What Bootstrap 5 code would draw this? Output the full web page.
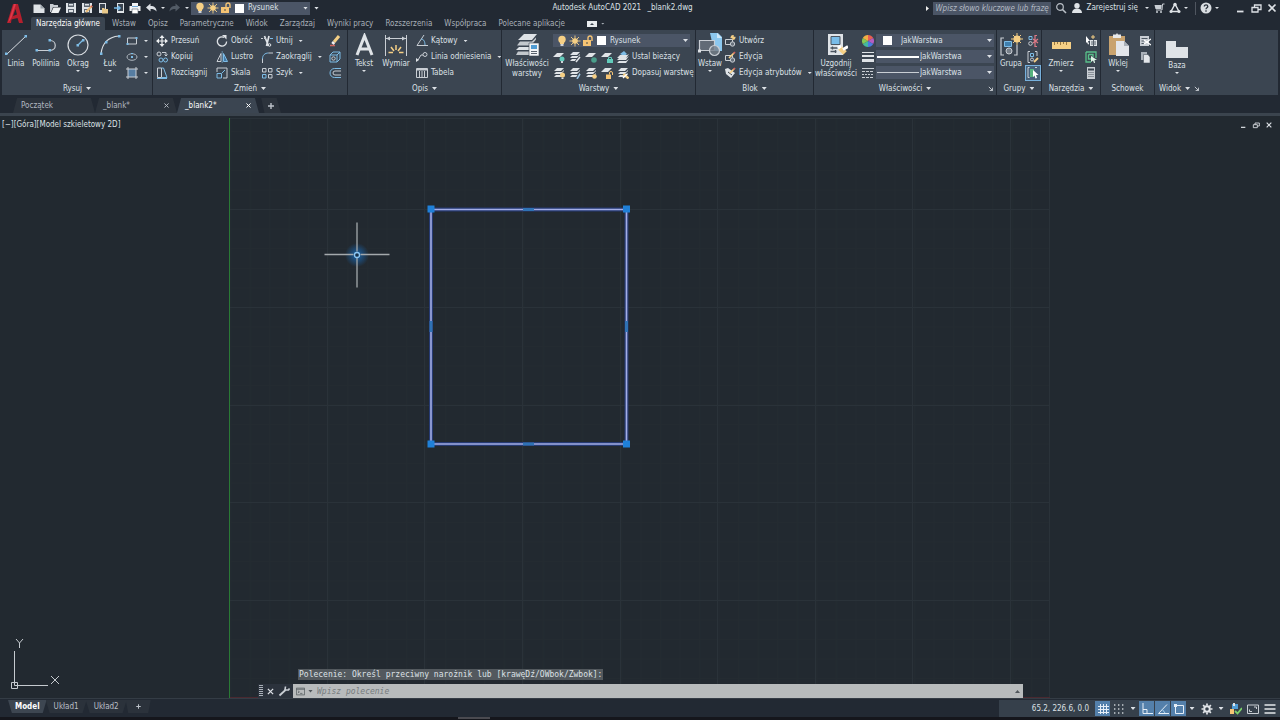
<!DOCTYPE html>
<html lang="pl">
<head>
<meta charset="utf-8">
<meta name="viewport" content="width=device-width, initial-scale=1">
<title>Autodesk AutoCAD 2021 _blank2.dwg</title>
<link href="https://cdn.jsdelivr.net/npm/bootstrap@5.3.0/dist/css/bootstrap.min.css" rel="stylesheet">
<style>
:root{--ink:#dde1e6;--dim:#a9b0b8;--frame:#222933;--ribbon:#3b4551;--field:#4b5566;--canvas:#222930;--sky:#7dbce6}
body{font:8px/12px "DejaVu Sans Condensed","Noto Sans",sans-serif;color:var(--ink);background:var(--frame);overflow:hidden}
button,select,input{font:inherit;color:inherit;background:none;border:0;padding:0;margin:0}
button{display:inline-flex;align-items:center;white-space:nowrap}
a{color:inherit;text-decoration:none;white-space:nowrap}
svg{flex:none;display:block}
.ic{width:12px;height:12px}
.big-ic{width:24px;height:24px}
.caret{width:5px;height:3px;flex:none;background:currentColor;clip-path:polygon(0 0,100% 0,50% 100%)}
.caret-s{width:4px;height:2px}
/* title bar and menu */
.logo-btn{width:31px;justify-content:center}
.title-row{height:16px}
.quick{gap:4px;padding-left:2px}
.tight{gap:3px}
.account{gap:4px;padding-right:2px}
.account .vr{margin-left:3px}
.win-first{margin-left:11px}
.app-title{padding-right:66px}
.field{background:var(--field);display:flex;align-items:center;gap:1px;padding:0 2px 0 3px;color:var(--ink)}
.field select{appearance:none;flex:1 1 0;min-width:0;outline:0;padding-left:3px;height:13px;padding-top:1px}
.layer-field{width:119px;height:13px;margin-left:2px}
.swatch{width:9px;height:9px;background:#fff;flex:none;margin-left:2px}
.find-box{width:118px;height:13px;background:var(--field);padding:0 2px;font-style:italic}
.find-box::placeholder{color:#b4bac4;opacity:1}
.menu-row{height:14px;padding-top:1px;color:var(--dim)}
.menu-row a{padding:0 6px;line-height:14px;height:13px}
.menu-row a.current{background:var(--ribbon);color:#fff;padding:0 5px;border-radius:2px 2px 0 0;margin-right:1px}
/* ribbon */
.ribbon{gap:1px;padding:0 2px;height:65px}
.pane{background:var(--ribbon);display:flex;flex-direction:column;flex:none}
.pane-body{display:flex;flex:1;padding:3px 3px 0}
.pane-title{height:14px;gap:4px;display:flex;align-items:center;justify-content:center;position:relative;padding-top:1px}
.pane-title .launch{position:absolute;right:3px;width:5px;height:5px}
.tool{flex-direction:column;justify-content:flex-start;line-height:10px;flex:none}
.tool span{margin-top:2px;white-space:pre-line;text-align:center}
.tool .caret{margin-top:1px}
.stack{display:flex;flex-direction:column;flex:none}
.stack>*{height:16px}
.stack button{gap:3px}
.stack .caret{margin-left:3px}
.marks{margin:0 2px 0 4px}
.combo{height:13px!important;margin:1px 0 2px}
.prop{width:118px}
.stroke-pick{padding-left:1px}
.on{border:1px solid #76b0dc!important;background:#47617a;width:16px}
.w28{width:28px}.w32{width:32px}.w44{width:44px}
/* file tabs */
.files{height:18px;padding:3px 0 0 13px;background:var(--frame)}
.file-tab{display:flex;align-items:center;justify-content:space-between;height:15px;width:82px;padding:0 7px 0 8px;background:#2c333c;color:#b2b8c0;clip-path:polygon(5% 0,95% 0,100% 100%,0 100%)}
.file-tab.current{background:var(--ribbon);color:#fff}
.file-tab .ic{width:7px;height:7px}
.add-tab{width:22px;height:15px;justify-content:center;background:#2c333c;clip-path:polygon(10% 0,80% 0,100% 100%,25% 100%)}
.add-tab .ic{margin-left:2px}
.band{height:3px;background:#3b444e}
/* drawing area */
.stage{background:var(--canvas);min-height:0}
.drawing{position:absolute;inset:0;width:100%;height:100%}
.view-label{position:absolute;left:2px;top:3px}
.view-ctl{position:absolute;right:7px;top:5px;gap:5px}
.view-ctl .ic{width:8px;height:8px}
.ucs{position:absolute;left:10px;bottom:6px;width:54px;height:54px}
.console{position:absolute;left:258px;right:257px;bottom:0;font-family:"DejaVu Sans Mono",monospace}
.echo{background:#53595e;margin-left:40px;padding:0 1px;line-height:11px;width:max-content;margin-bottom:4px}
.cmd{height:14px;background:#2b323c;gap:3px}
.x-ic{width:9px;height:9px}
.cmd-in{background:#b8bbbc;color:#50565b;padding:0 3px}
.cmd-in input{font-style:italic;outline:0;padding-top:1px}
.cmd-in input::placeholder{color:#767b7e;opacity:1}
/* bottom bars */
.foot{height:19px;border-top:1px solid #343c45}
.sheet{padding:0 8px;height:13px;line-height:14px;margin:1px -1px 0 0;background:#2b323b;color:#b9bfc6;clip-path:polygon(0 0,100% 0,90% 100%,10% 100%)}
.sheet.current{background:#3d4651;color:#fff;font-weight:700;padding:0 7px}
.status{background:#36404b;height:17px;padding-right:2px;margin-top:1px}
.coords{width:96px;padding-right:6px}
.lit,.plain{height:15px;width:15px;justify-content:center}
.lit{background:#5480ab}
.lit+.lit{margin-left:1px}
.plain{width:17px}
.plain.thin{width:12px}
.dock{height:3px;background:#15161c}
.dock i{width:32px;height:2px;background:#4a4a50;margin-left:458px;display:block}
</style>
</head>
<body class="vh-100 d-flex flex-column">

<svg width="0" height="0" class="position-absolute" aria-hidden="true">
<defs>
<symbol id="new" viewBox="0 0 12 12"><path fill="#dfe3e7" d="M.5 2.500h7l4 4V11H.5z"/><path fill="#9aa2aa" d="M7.500 2.500v4h4z"/></symbol>
<symbol id="open" viewBox="0 0 12 12"><path fill="#c9ced4" d="M1 2h3l1 1h4v2H4L2 10H1z"/><path fill="#eef0f2" d="M4.500 5.500H12L9.500 11H2z"/></symbol>
<symbol id="save" viewBox="0 0 12 12"><path fill="#dfe3e7" d="M1 1h10v10H1z"/><path fill="#59626d" d="M3 1h6v4H3zM3 7h6v4H3z"/><path fill="#dfe3e7" d="M4 2h4v1.500H4zM4 8h4v2H4z"/></symbol>
<symbol id="saveas" viewBox="0 0 12 12"><use href="#save"/><path stroke="#e9b872" stroke-width="2" d="M5 10l6-6"/><path stroke="#d86a5d" stroke-width="2" d="M10 5l1-1"/></symbol>
<symbol id="webopen" viewBox="0 0 12 12"><path fill="#dfe3e7" d="M2 1h7v10H2z"/><path fill="#3b4551" d="M3 2h5v6H3z"/><path fill="#e9c98a" d="M5 6h2l1 1h3v4.500H5z"/></symbol>
<symbol id="websave" viewBox="0 0 12 12"><path fill="#dfe3e7" d="M4 1h7v10H4z"/><path fill="#3b4551" d="M5 2h5v7H5z"/><path stroke="#74b8e8" fill="none" stroke-width="1.500" d="M1 6h6M5 4l2 2-2 2"/></symbol>
<symbol id="print" viewBox="0 0 12 12"><path fill="#f2f3f5" d="M3 1h6v3H3zM.5 4h11v5H.5z"/><path fill="#70a9d8" d="M3 4h6v1H3z"/><path fill="#fff" stroke="#555e69" stroke-width=".6" d="M3 7h6v4.500H3z"/></symbol>
<symbol id="undo" viewBox="0 0 12 12"><path fill="currentColor" d="M1 5.500l4.500-4V4c4 0 6 2 6 5.500C10 7.500 8 7 5.500 7v2.500z"/></symbol>
<symbol id="redo" viewBox="0 0 12 12"><path fill="#525b66" d="M11 5.500l-4.500-4V4c-4 0-6 2-6 5.500C2 7.500 4 7 6.500 7v2.500z"/></symbol>
<symbol id="bulb" viewBox="0 0 12 12"><circle cx="6" cy="4.500" r="3.700" fill="#f5cf85"/><path fill="#f5cf85" d="M4 7h4v2H4z"/><path fill="#cfd3d8" d="M4.500 9h3v2h-3z"/></symbol>
<symbol id="sun" viewBox="0 0 12 12"><circle cx="6" cy="6" r="2.800" fill="#f5cf85"/><path stroke="#f5cf85" d="M6 .5v11M.5 6h11M2 2l8 8M10 2l-8 8" stroke-width=".9"/></symbol>
<symbol id="lock" viewBox="0 0 12 12"><path fill="#f5c474" d="M1 5h8v6H1z"/><path fill="none" stroke="#f5c474" stroke-width="1.400" d="M6 5V3a2 2 0 0 1 4 0v3"/><path fill="#4b4a45" d="M4.500 7h1v2h-1z"/></symbol>
<symbol id="glass" viewBox="0 0 12 12"><circle cx="5" cy="5" r="3.300" fill="none" stroke="#b9bfc6" stroke-width="1.200"/><path stroke="#b9bfc6" stroke-width="1.600" d="M7.500 7.500L11 11"/></symbol>
<symbol id="user" viewBox="0 0 12 12"><circle cx="6" cy="3.700" r="2.700" fill="#dfe3e7"/><path fill="#dfe3e7" d="M1 11c0-3 2-4.500 5-4.500S11 8 11 11z"/></symbol>
<symbol id="cart" viewBox="0 0 12 12"><path fill="none" stroke="#c9ced4" d="M11.500 2H9.500L9 8H3"/><path fill="#c9ced4" d="M1.500 3h7.200L8.300 7H2.500z"/><circle cx="4" cy="10" r="1" fill="#c9ced4"/><circle cx="8" cy="10" r="1" fill="#c9ced4"/></symbol>
<symbol id="tri-net" viewBox="0 0 12 12"><path fill="none" stroke="#dfe3e7" stroke-width="1.500" d="M6 2L2 9.500M6 2l4 7.500M3 9.500h6"/><circle cx="6" cy="2.500" r="1.700" fill="#dfe3e7"/><circle cx="2" cy="9.500" r="1.500" fill="#dfe3e7"/><circle cx="10" cy="9.500" r="1.500" fill="#dfe3e7"/></symbol>
<symbol id="help" viewBox="0 0 12 12"><circle cx="6" cy="6" r="5.500" fill="#d9dde1"/><path fill="none" stroke="#2a323c" stroke-width="1.300" d="M4.300 4.500c0-2.200 3.500-2.200 3.500 0C7.800 5.800 6 5.700 6 7.200M6 8.300v1.400"/></symbol>
<symbol id="min" viewBox="0 0 12 12"><path stroke="currentColor" stroke-width="1.800" d="M3 9.500h6.500"/></symbol>
<symbol id="restore" viewBox="0 0 12 12"><path fill="none" stroke="currentColor" stroke-width="1.300" d="M2 5.500h6v4.500H2zM4.500 5.500V3H11v4.500H8"/></symbol>
<symbol id="close" viewBox="0 0 12 12"><path stroke="currentColor" stroke-width="1.700" d="M2.500 2.500l7 7M9.500 2.500l-7 7"/></symbol>
<symbol id="plus" viewBox="0 0 12 12"><path stroke="#bcc2c9" stroke-width="1.400" d="M6 3v6M3 6h6"/></symbol>

<symbol id="line" viewBox="0 0 24 24"><path stroke="#d8dce1" d="M3 21L22 3"/><path fill="#7dbce6" d="M1 19.500h2.500V22H1zM20.500 2H23v2.500h-2.500z"/></symbol>
<symbol id="pline" viewBox="0 0 24 24"><path fill="none" stroke="#c9ced4" stroke-width="1.200" d="M3 17.500h13c7 0 7-10 0-10"/><path fill="#7dbce6" d="M1.500 16h2.500v2.500H1.500zM14.500 6H17v2.500h-2.500zM14.500 16H17v2.500h-2.500z"/></symbol>
<symbol id="circle" viewBox="0 0 24 24"><circle cx="12" cy="12" r="10" fill="none" stroke="#d8dce1" stroke-width="1.200"/><path stroke="#7dbce6" stroke-width="1.200" d="M12 12l5-5"/><path fill="#7dbce6" d="M10.500 11H13v2.500h-2.500zM16 6h2.500v2.500H16z"/></symbol>
<symbol id="arc" viewBox="0 0 24 24"><path fill="none" stroke="#d8dce1" stroke-width="1.200" d="M3 21C4 11 10 4 21 3"/><path fill="#7dbce6" d="M2 19.500h2.500V22H2zM7 8h2.500v2.500H7zM20 2h2.500v2.500H20z"/></symbol>
<symbol id="rect" viewBox="0 0 12 12"><path fill="none" stroke="#c9ced4" d="M1.500 3h9v6h-9z"/><path fill="#7dbce6" d="M.5 8h2v2h-2zM9.500 2h2v2h-2z"/></symbol>
<symbol id="ellipse" viewBox="0 0 12 12"><ellipse cx="6" cy="6" rx="5" ry="3.300" fill="none" stroke="#aeb6be"/><path fill="#7dbce6" d="M5 5h2v2H5zM5 2h2v1H5z"/></symbol>
<symbol id="hatch" viewBox="0 0 12 12"><path fill="#567da2" d="M2 2h8v8H2z"/><path fill="none" stroke="#c9ced4" d="M2 0v12M10 0v12M0 2h12M0 10h12"/></symbol>

<symbol id="move" viewBox="0 0 12 12"><path stroke="#eef0f2" stroke-width="1.200" d="M6 2v8M2 6h8"/><path fill="#eef0f2" d="M6 0l2.500 3h-5zM6 12l2.500-3h-5zM0 6l3-2.500v5zM12 6L9 3.500v5z"/></symbol>
<symbol id="copy" viewBox="0 0 12 12"><g fill="none" stroke="#c9ced4"><circle cx="3" cy="3" r="2"/><path d="M6 1.500h4v3M8.500 3.500l1.500 1.500 1.500-1.500"/><circle cx="5" cy="9" r="2" stroke="#7dbce6"/><circle cx="9.500" cy="9" r="2" stroke="#7dbce6"/></g></symbol>
<symbol id="stretch" viewBox="0 0 12 12"><path fill="none" stroke="#c9ced4" d="M1.500 1h4v9.500h-4z"/><path fill="none" stroke="#7dbce6" d="M5.500 1h2l3.500 9.500H5.500M1 11.500h10"/></symbol>
<symbol id="rotate" viewBox="0 0 12 12"><path fill="none" stroke="#dfe3e7" stroke-width="1.300" d="M8 2.300A4.600 4.600 0 1 0 10.600 6.500"/><path fill="#dfe3e7" d="M6 0h4.500v4.500z"/></symbol>
<symbol id="mirror" viewBox="0 0 12 12"><path fill="none" stroke="#c9ced4" d="M5 2.500v8H1z"/><path fill="#437aa8" stroke="#7dbce6" d="M7.500 2.500v8h4z"/><path stroke="#7dbce6" stroke-width=".6" d="M6.200 0v12"/></symbol>
<symbol id="scale" viewBox="0 0 12 12"><path fill="none" stroke="#c9ced4" d="M1 5V1h10v10H7"/><path fill="none" stroke="#7dbce6" d="M1 6.500h4.500V11H1zM6 6l3-3"/></symbol>
<symbol id="trim" viewBox="0 0 12 12"><path stroke="#dfe3e7" stroke-width="1.700" d="M3.500 1l4 10M8 1L5.500 11"/><path stroke="#c9ced4" stroke-dasharray="2 1" d="M0 3.500h5"/><path stroke="#7dbce6" d="M9 3.500h3"/><circle cx="8.500" cy="10" r="1.300" fill="none" stroke="#dfe3e7"/></symbol>
<symbol id="fillet" viewBox="0 0 12 12"><path fill="none" stroke="#7dbce6" d="M1.500 8c0-4 2.500-6 6-6"/><path stroke="#c9ced4" d="M1.500 8v4M7.500 2H12"/></symbol>
<symbol id="array" viewBox="0 0 12 12"><g fill="none"><path stroke="#c9ced4" d="M1.500 1.500h3.500v3.500H1.500zM7.500 1.500H11v3.500H7.500zM7.500 7.500H11V11H7.500z"/><path stroke="#7dbce6" d="M1.500 7.500h3.500V11H1.500z"/></g></symbol>
<symbol id="erase" viewBox="0 0 12 12"><path stroke="#f3cf85" stroke-width="3" d="M5 7l5-6"/><path stroke="#f0f0f0" stroke-width="3" d="M3.500 9L5 7"/><path stroke="#d0645d" stroke-width="1.500" d="M1 10.500h5"/></symbol>
<symbol id="explode" viewBox="0 0 12 12"><path fill="none" stroke="#7dbce6" d="M1 4h7v7H1zM1 4l3-3h7v7L8 11M8 4l3-3"/><circle cx="4.500" cy="7.500" r="1.700" fill="none" stroke="#c9ced4"/></symbol>
<symbol id="offset" viewBox="0 0 12 12"><path fill="none" stroke="#7dbce6" d="M12 1.500H5.500a4.500 4.500 0 0 0 0 9H12"/><path fill="none" stroke="#c9ced4" d="M12 4H6a2 2 0 0 0 0 4h6"/></symbol>

<symbol id="letter-a" viewBox="0 0 24 24"><path fill="none" stroke="#dfe3e7" stroke-width="3" d="M5 22L12.500 3 20 22M7.500 16h10"/></symbol>
<symbol id="dim" viewBox="0 0 24 24"><path stroke="#c9ced4" d="M1.500 2v21M22.500 2v21M2 5.500h20"/><path fill="#c9ced4" d="M2 5.500l4-2v4zM22 5.500l-4-2v4z"/><path stroke="#f5cf85" stroke-width="1.500" d="M12 12v5M7 14l3 4M17 14l-3 4M4.500 19.500H9M15 19.500h4.500"/></symbol>
<symbol id="angle" viewBox="0 0 12 12"><path fill="none" stroke="#c9ced4" d="M8 0L1 10.500h11"/><path fill="none" stroke="#7dbce6" d="M5 4c3 0 4 3 4 6"/></symbol>
<symbol id="leader" viewBox="0 0 12 12"><circle cx="9" cy="3.500" r="2" fill="none" stroke="#c9ced4"/><path fill="none" stroke="#c9ced4" d="M7 4H5L2 9"/><path fill="#dfe3e7" d="M0 11V7l3 2z"/></symbol>
<symbol id="grid" viewBox="0 0 12 12"><path fill="none" stroke="#c9ced4" d="M.5 1.500h11v9H.5zM3.500 4v7M6 4v7M8.500 4v7"/><path fill="#c9ced4" d="M1 2h10v1.500H1z"/></symbol>

<symbol id="layers" viewBox="0 0 24 24"><g fill="#dfe3e7"><path d="M9 1h13l-5 6H3z"/><path d="M5 8.500h12l4-4v2l-5 6H2z" fill="#c3c8cd"/><path d="M4 14h13l-2 3H1z"/><path d="M3 18.500h11V22H1z" fill="#c3c8cd"/></g><path fill="#f2f4f6" stroke="#3b4551" stroke-width=".6" d="M14 10h10v13H14z"/><path fill="#4f9bd3" d="M16 12h6v4h-6z"/><path stroke="#59626d" d="M16 18.500h6M16 20.500h6"/></symbol>
<symbol id="sheets" viewBox="0 0 12 12"><path fill="#dfe3e7" d="M4 1h7L8 4H1zM3 5h6l2-2v1L8 7H1zM3 8h6l2-2v1l-3 3H1z"/></symbol>
<symbol id="ly1" viewBox="0 0 12 12"><path fill="#dfe3e7" d="M4 2h7L7 6H0z"/><circle cx="9" cy="8" r="2.500" fill="#62cbbb"/><path fill="#cfd3d8" d="M8 10h2v2H8z"/></symbol>
<symbol id="ly2" viewBox="0 0 12 12"><use href="#sheets"/><path stroke="#3b4551" stroke-width="3" d="M7 11l4-5"/><path stroke="#dfe3e7" stroke-width="1.500" d="M7 11l4-5"/></symbol>
<symbol id="ly3" viewBox="0 0 12 12"><path fill="#dfe3e7" d="M4 2h7L7 6H0z"/><circle cx="9" cy="9" r="2.800" fill="#4a9e8b"/></symbol>
<symbol id="ly4" viewBox="0 0 12 12"><path fill="#dfe3e7" d="M4 2h7L7 6H0z"/><path fill="#62cbbb" d="M6 8h6v4H6z"/><path fill="none" stroke="#62cbbb" d="M7.500 8V6.500h3V8"/></symbol>
<symbol id="ly5" viewBox="0 0 12 12"><path fill="#7dbce6" d="M3 3l4-3 3 3-3 2z"/><path fill="#dfe3e7" d="M3 4h7l2-1-3 4H0zM2 7h7l3-2-3 4H0zM2 10h7l3-2-3 4H0z"/></symbol>
<symbol id="ly6" viewBox="0 0 12 12"><use href="#sheets"/><circle cx="9.500" cy="8" r="2.500" fill="#f5cf85"/><path fill="#dfe3e7" d="M8.500 10.500h2V12h-2z"/></symbol>
<symbol id="ly7" viewBox="0 0 12 12"><use href="#sheets"/><path stroke="#3b4551" stroke-width="3" d="M7.500 12l3.500-5"/><path stroke="#9cc6e6" stroke-width="1.500" d="M8 12l3-5"/></symbol>
<symbol id="ly8" viewBox="0 0 12 12"><use href="#sheets"/><circle cx="9.500" cy="9.500" r="2.300" fill="#f5cf85"/></symbol>
<symbol id="ly9" viewBox="0 0 12 12"><path fill="#dfe3e7" d="M4 1h7L7 5H0z"/><path fill="#f5c474" d="M5 7.500h5V12H5z"/><path fill="none" stroke="#f5c474" d="M8.500 7.500V6a1.500 1.500 0 0 1 3 0v2"/></symbol>
<symbol id="ly10" viewBox="0 0 12 12"><use href="#sheets"/><path stroke="#f5cf85" stroke-width="2.500" d="M6.500 7l5 4.500"/><path stroke="#fff" stroke-width="1.500" d="M6 11l4-4"/></symbol>

<symbol id="insert" viewBox="0 0 24 24"><path fill="#8cc8ef" d="M12 0h8l4 4v14h-8z"/><path fill="#cfe8f8" d="M19 0v5h5z"/><path fill="#626b76" stroke="#c9ced4" stroke-width="1.200" d="M1.500 7.500h15v10h-15z"/><path fill="#dfe3e7" d="M0 16.500h3v3H0z"/><circle cx="16.500" cy="17.500" r="5" fill="#77808a" fill-opacity=".8" stroke="#c9ced4" stroke-width="1.200"/></symbol>
<symbol id="blk" viewBox="0 0 12 12"><path fill="none" stroke="#c9ced4" d="M1.500 4.500h7v5h-7z"/><circle cx="8.500" cy="9" r="2.200" fill="#69727d" stroke="#c9ced4"/></symbol>
<symbol id="blk-new" viewBox="0 0 12 12"><use href="#blk"/><path stroke="#f5cf85" stroke-width="1.400" d="M9 0v5M6.500 2.500h5M7.300.8l3.400 3.400"/></symbol>
<symbol id="blk-edit" viewBox="0 0 12 12"><use href="#blk"/><path stroke="#f5cf85" stroke-width="1.700" d="M5 7l5-5"/><path stroke="#d0645d" stroke-width="1.700" d="M9.500 2.500L11 1"/></symbol>
<symbol id="attr" viewBox="0 0 12 12"><path fill="#dfe3e7" d="M1 2l3-1 7 5-4 5-5-4z"/><path stroke="#3b4551" d="M4 5l4 3"/><path stroke="#f5cf85" stroke-width="1.700" d="M6 6l4-4"/><path stroke="#d0645d" stroke-width="1.700" d="M9.500 2.500L11 1"/></symbol>
<symbol id="match" viewBox="0 0 24 24"><path fill="#dfe3e7" d="M4 1h15v21H4z"/><path fill="#79bce8" stroke="#4b5560" d="M7 3.500h9v8H7z"/><path stroke="#4b5560" stroke-width="1.300" d="M6.500 15h7M6.500 18.500h6M8.500 13.500v3M11.500 17v3"/><path stroke="#f5cf85" stroke-width="5" d="M16 15l5 5"/><path stroke="#fff" stroke-width="3" d="M19 16.500l5-3M14 15l3-2"/></symbol>
<symbol id="wheel" viewBox="0 0 12 12"><path fill="#e85f52" d="M6 6V0a6 6 0 0 1 5.200 3z"/><path fill="#b45dc0" d="M6 6l5.200-3a6 6 0 0 1 0 6z"/><path fill="#4c7be0" d="M6 6l5.200 3A6 6 0 0 1 6 12z"/><path fill="#44b9a0" d="M6 6v6A6 6 0 0 1 .8 9z"/><path fill="#86c855" d="M6 6L.8 9a6 6 0 0 1 0-6z"/><path fill="#f3b044" d="M6 6L.8 3A6 6 0 0 1 6 0z"/></symbol>
<symbol id="weight" viewBox="0 0 12 12"><path fill="#dfe3e7" d="M0 1h12v1H0zM0 4h12v2H0zM0 8h12v3H0z"/></symbol>
<symbol id="ltype" viewBox="0 0 12 12"><path stroke="#c9ced4" d="M0 1.500h12"/><path stroke="#c9ced4" stroke-dasharray="3 1" d="M0 4.500h12M0 10.500h12"/><path stroke="#c9ced4" stroke-dasharray="2 1" d="M0 7.500h12"/></symbol>

<symbol id="group" viewBox="0 0 24 24"><path fill="none" stroke="#c9ced4" stroke-width="1.200" d="M5 5H2v17h3M15 22h3V12"/><path fill="#3f7fae" stroke="#7dbce6" d="M5.500 8.500h7v5h-7z"/><circle cx="10" cy="18" r="3" fill="#77808a" stroke="#c9ced4"/><circle cx="18" cy="6" r="3.500" fill="#f5cf85"/><path stroke="#f5cf85" d="M18 0v12M12 6h12M14 2l8 8M22 2l-8 8"/></symbol>
<symbol id="ungroup" viewBox="0 0 12 12"><path fill="none" stroke="#7dbce6" d="M2 1.500h3v3H2z"/><circle cx="3.500" cy="8.500" r="1.800" fill="none" stroke="#c9ced4"/><path fill="none" stroke="#e07a86" stroke-width="1.200" d="M10 .5H8v11h2M6 4l5 4M11 4L6 8"/></symbol>
<symbol id="gr-edit" viewBox="0 0 12 12"><path fill="none" stroke="#c9ced4" d="M3 .5H1v11h2M8 .5h2V5"/><path fill="none" stroke="#7dbce6" d="M3.500 2.500h3v3h-3z"/><circle cx="5" cy="8.500" r="1.500" fill="none" stroke="#c9ced4"/><path stroke="#f5cf85" stroke-width="1.800" d="M7 11l4-4"/></symbol>
<symbol id="gr-sel" viewBox="0 0 12 12"><path fill="none" stroke="#c9ced4" d="M2.500.5H1v10h1.500M8 .5h2"/><path fill="#56b37f" d="M3 2h4v8H3z"/><path fill="#fff" d="M6 3l5.500 5H9l1 3-1.500.5-1-3L6 10z"/></symbol>
<symbol id="ruler" viewBox="0 0 24 24"><path fill="#f5cf85" d="M3 9h19v7H3z"/><path stroke="#9b7a42" d="M5.500 9v3M8.500 9v2M11.500 9v3M14.500 9v2M17.500 9v3"/></symbol>
<symbol id="qsel" viewBox="0 0 12 12"><path fill="#dfe3e7" d="M5 5h7v6H5z"/><path stroke="#59626d" d="M6 7h5M6 9h5M8.500 5v6"/><path stroke="#f5cf85" d="M8 0v4M6 2h4"/><path fill="#fff" d="M1 1l4 5H3l1 3-1 .5L2 7 1 8z"/></symbol>
<symbol id="selall" viewBox="0 0 12 12"><path fill="none" stroke="#58c08a" stroke-width="1.300" d="M1 1h10v6M1 1v10h5M3.500 3.500H8V6M3.500 3.500V8H6"/><path fill="#dff5e8" d="M6 5l6 4H9.500l.5 3H9L8 9.500 6 11z"/></symbol>
<symbol id="calc" viewBox="0 0 12 12"><path fill="#c9ced4" d="M2 0h8v12H2z"/><path fill="#3b4551" d="M3 1.500h6v2H3z"/><path stroke="#4c5661" stroke-dasharray="1 1" d="M3.500 5.500h6M3.500 7.500h6M3.500 9.500h6"/></symbol>
<symbol id="paste" viewBox="0 0 24 24"><path fill="#c9a36e" d="M3 3h16v19H3z"/><path fill="#e8eaec" d="M7 1.500h3l1-1.500 1 1.500h3V5H7z"/><path fill="#e3e6ea" d="M10 8h8l5 5v10H10z"/><path fill="#aab1b9" d="M18 8v5h5z"/></symbol>
<symbol id="cut" viewBox="0 0 12 12"><path fill="#c9ced4" d="M1 1h9v10H1z"/><path stroke="#4c5661" d="M2.500 3.500h6M2.500 6h3M2.500 8.500h3"/><path stroke="#fff" stroke-width="1.300" d="M5 5l7 5M5 9l7-5"/></symbol>
<symbol id="clip" viewBox="0 0 12 12"><path fill="#aab1b9" d="M2 1h6v8H2z"/><path fill="#e3e6ea" stroke="#3b4551" stroke-width=".5" d="M4.500 3.500H9L11 6v6H4.500z"/></symbol>
<symbol id="base" viewBox="0 0 24 24"><path fill="#dfe3e7" d="M1 4h10v6h12v11H1z"/></symbol>
<symbol id="launch" viewBox="0 0 6 6"><path fill="none" stroke="currentColor" d="M1 1l4 4M5.500 2v3.500H2"/></symbol>
<symbol id="wrench" viewBox="0 0 12 12"><path stroke="#c9ced4" stroke-width="1.800" d="M1.500 10.500L7.500 5"/><path fill="none" stroke="#c9ced4" stroke-width="1.600" d="M7.500 1.500L7 5l3.500 0 1-1.500"/></symbol>
<symbol id="prompt" viewBox="0 0 12 12"><path fill="none" stroke="#4f5559" d="M.5 1.500h11v9H.5zM.5 3h11M2.500 5l2 1.500-2 1.500M5.500 8.500h3"/></symbol>
<symbol id="s-grid" viewBox="0 0 12 12"><path stroke="#e6eef6" d="M3.500 1v10M6.500 1v10M9.500 1v10M1 3.500h11M1 6.500h11M1 9.500h11"/></symbol>
<symbol id="s-dots" viewBox="0 0 12 12"><path stroke="#c9ced4" stroke-width="1.400" stroke-dasharray="1.400 2.600" d="M1 2h10M1 6h10M1 10h10"/></symbol>
<symbol id="s-ortho" viewBox="0 0 12 12"><path fill="none" stroke="#e6eef6" d="M2 0v10.500h10M2 6.500h4v4"/></symbol>
<symbol id="s-polar" viewBox="0 0 12 12"><path fill="none" stroke="#e6eef6" d="M10 1.500L1.500 10.500H12"/><path stroke="#a9d3f2" d="M5 6l3 4"/></symbol>
<symbol id="s-snap" viewBox="0 0 12 12"><path fill="none" stroke="#e6eef6" d="M2.500 2.500h8v8h-8z"/><path fill="#e6eef6" d="M1 1h3v3H1z"/></symbol>
<symbol id="gear" viewBox="0 0 12 12"><circle cx="6" cy="6" r="2.800" fill="none" stroke="#e3e6ea" stroke-width="2"/><path stroke="#e3e6ea" stroke-width="1.700" d="M6 .5v2M6 9.500v2M.5 6h2M9.500 6h2M2.100 2.100l1.400 1.400M8.500 8.500l1.400 1.400M9.900 2.100L8.500 3.500M3.500 8.500L2.100 9.900"/></symbol>
<symbol id="s-mon" viewBox="0 0 12 12"><path fill="#4f9bd3" d="M2 1h6v5H2z"/><path fill="#f5c474" d="M0 6h4v5H0z"/><path fill="none" stroke="#7bd06b" stroke-width="1.800" d="M5 8l2.500 2.500L12 5"/><path fill="#dfe3e7" d="M3 0h2v3H3z"/></symbol>
<symbol id="s-full" viewBox="0 0 12 12"><path fill="none" stroke="#c9ced4" d="M.5 2h11v8.500H.5zM7 4h2.500v2M5 8.500H2.500v-2"/></symbol>
<symbol id="s-menu" viewBox="0 0 12 12"><path stroke="#e3e6ea" stroke-width="1.400" d="M.5 2h11M.5 6h11M.5 10h11"/></symbol>
</defs>
</svg>

<header class="d-flex">
  <button class="logo-btn align-items-start pt-1" aria-label="Menu aplikacji"><svg width="18" height="20" viewBox="0 0 18 20"><path fill="#b51f2d" d="M6 0h5l5 19h-4l-1.500-5-6 1.500L4 19H0z"/><path fill="#e0384a" d="M7 0h2L4.500 14 1 19z"/><path fill="#222933" d="M8.500 5L10 10.500 6 12z"/></svg></button>
  <div class="flex-grow-1">
    <div class="title-row d-flex align-items-center position-relative">
      <div class="quick d-flex align-items-center">
        <button aria-label="Nowy"><svg class="ic"><use href="#new"/></svg></button>
        <button aria-label="Otwórz"><svg class="ic"><use href="#open"/></svg></button>
        <button aria-label="Zapisz"><svg class="ic"><use href="#save"/></svg></button>
        <button aria-label="Zapisz jako"><svg class="ic"><use href="#saveas"/></svg></button>
        <button aria-label="Otwórz z sieci"><svg class="ic"><use href="#webopen"/></svg></button>
        <button aria-label="Zapisz w sieci"><svg class="ic"><use href="#websave"/></svg></button>
        <button aria-label="Drukuj"><svg class="ic"><use href="#print"/></svg></button>
        <button class="gap-1" aria-label="Cofnij"><svg class="ic"><use href="#undo"/></svg><i class="caret caret-s"></i></button>
        <button class="gap-1" aria-label="Ponów"><svg class="ic"><use href="#redo"/></svg><i class="caret caret-s"></i></button>
      </div>
      <div class="field layer-field"><svg class="ic"><use href="#bulb"/></svg><svg class="ic"><use href="#sun"/></svg><svg class="ic"><use href="#lock"/></svg><i class="swatch"></i><select class="pt-0" aria-label="Warstwa"><option>Rysunek</option></select><i class="caret"></i></div>
      <button class="ms-1" aria-label="Dostosuj pasek"><i class="caret"></i></button>
      <div class="position-absolute start-0 end-0 text-center pe-none app-title"><span class="me-1">Autodesk AutoCAD 2021</span> <span>_blank2.dwg</span></div>
      <div class="account d-flex align-items-center ms-auto">
        <button aria-label="Zwiń"><svg width="3" height="5" viewBox="0 0 3 5"><path fill="#eee" d="M0 0l3 2.500L0 5z"/></svg></button>
        <input class="find-box" type="text" placeholder="Wpisz słowo kluczowe lub frazę" aria-label="Szukaj">
        <button aria-label="Znajdź"><svg class="ic"><use href="#glass"/></svg></button>
        <button class="tight"><svg class="ic"><use href="#user"/></svg>Zarejestruj się<i class="caret caret-s ms-1"></i></button>
        <button aria-label="Sklep"><svg class="ic"><use href="#cart"/></svg></button>
        <button class="tight" aria-label="Autodesk App Store"><svg class="ic"><use href="#tri-net"/></svg><i class="caret caret-s"></i></button>
        <span class="vr"></span>
        <button class="tight" aria-label="Pomoc"><svg class="ic"><use href="#help"/></svg><i class="caret caret-s"></i></button>
        <button class="win-first" aria-label="Minimalizuj"><svg class="ic"><use href="#min"/></svg></button>
        <button aria-label="Przywróć"><svg class="ic"><use href="#restore"/></svg></button>
        <button aria-label="Zamknij"><svg class="ic"><use href="#close"/></svg></button>
      </div>
    </div>
    <nav class="menu-row d-flex" aria-label="Wstążka">
      <a class="current" href="#">Narzędzia główne</a><a href="#">Wstaw</a><a href="#">Opisz</a><a href="#">Parametryczne</a><a href="#">Widok</a><a href="#">Zarządzaj</a><a href="#">Wyniki pracy</a><a href="#">Rozszerzenia</a><a href="#">Współpraca</a><a href="#">Polecane aplikacje</a>
      <button class="ms-3 gap-1" aria-label="Tryb wstążki"><svg width="10" height="6" viewBox="0 0 10 6"><path fill="#e8ebee" d="M0 0h10v6H0z"/><path fill="#39424d" d="M3 4l2-2 2 2z"/></svg><i class="caret caret-s"></i></button>
    </nav>
  </div>
</header>

<div class="ribbon d-flex">
  <section class="pane" style="width:150px">
    <div class="pane-body px-0">
      <button class="tool w28"><svg class="big-ic"><use href="#line"/></svg><span>Linia</span></button>
      <button class="tool w32"><svg class="big-ic"><use href="#pline"/></svg><span>Polilinia</span></button>
      <button class="tool w32"><svg class="big-ic"><use href="#circle"/></svg><span>Okrąg</span><i class="caret caret-s"></i></button>
      <button class="tool w32"><svg class="big-ic"><use href="#arc"/></svg><span>Łuk</span><i class="caret caret-s"></i></button>
      <div class="stack">
        <button aria-label="Prostokąt"><svg class="ic"><use href="#rect"/></svg><i class="caret caret-s"></i></button>
        <button aria-label="Elipsa"><svg class="ic"><use href="#ellipse"/></svg><i class="caret caret-s"></i></button>
        <button aria-label="Kreskuj"><svg class="ic"><use href="#hatch"/></svg><i class="caret caret-s"></i></button>
      </div>
    </div>
    <div class="pane-title">Rysuj<i class="caret"></i></div>
  </section>
  <section class="pane" style="width:194px">
    <div class="pane-body">
      <div class="stack" style="width:60px">
        <button><svg class="ic"><use href="#move"/></svg>Przesuń</button>
        <button><svg class="ic"><use href="#copy"/></svg>Kopiuj</button>
        <button><svg class="ic"><use href="#stretch"/></svg>Rozciągnij</button>
      </div>
      <div class="stack" style="width:45px">
        <button><svg class="ic"><use href="#rotate"/></svg>Obróć</button>
        <button><svg class="ic"><use href="#mirror"/></svg>Lustro</button>
        <button><svg class="ic"><use href="#scale"/></svg>Skala</button>
      </div>
      <div class="stack" style="width:68px">
        <button><svg class="ic"><use href="#trim"/></svg>Utnij<i class="caret caret-s"></i></button>
        <button><svg class="ic"><use href="#fillet"/></svg>Zaokrąglij<i class="caret caret-s"></i></button>
        <button><svg class="ic"><use href="#array"/></svg>Szyk<i class="caret caret-s"></i></button>
      </div>
      <div class="stack">
        <button aria-label="Wymaż"><svg class="ic"><use href="#erase"/></svg></button>
        <button aria-label="Rozbij"><svg class="ic"><use href="#explode"/></svg></button>
        <button aria-label="Odsuń"><svg class="ic"><use href="#offset"/></svg></button>
      </div>
    </div>
    <div class="pane-title">Zmień<i class="caret"></i></div>
  </section>
  <section class="pane" style="width:153px">
    <div class="pane-body ps-0">
      <button class="tool w32"><svg class="big-ic"><use href="#letter-a"/></svg><span>Tekst</span><i class="caret caret-s"></i></button>
      <button class="tool w32"><svg class="big-ic"><use href="#dim"/></svg><span>Wymiar</span></button>
      <div class="stack ps-1">
        <button><svg class="ic"><use href="#angle"/></svg>Kątowy<i class="caret caret-s"></i></button>
        <button><svg class="ic"><use href="#leader"/></svg>Linia odniesienia<i class="caret caret-s"></i></button>
        <button><svg class="ic"><use href="#grid"/></svg>Tabela</button>
      </div>
    </div>
    <div class="pane-title">Opis<i class="caret"></i></div>
  </section>
  <section class="pane" style="width:193px">
    <div class="pane-body">
      <button class="tool w44"><svg class="big-ic"><use href="#layers"/></svg><span>Właściwości
warstwy</span></button>
      <div class="stack ms-1">
        <div class="field combo" style="width:137px"><svg class="ic"><use href="#bulb"/></svg><svg class="ic"><use href="#sun"/></svg><svg class="ic"><use href="#lock"/></svg><i class="swatch"></i><select aria-label="Bieżąca warstwa"><option>Rysunek</option></select><i class="caret"></i></div>
        <div class="d-flex gap-1"><button aria-label="Wyłącz"><svg class="ic"><use href="#ly1"/></svg></button><button aria-label="Izoluj"><svg class="ic"><use href="#ly2"/></svg></button><button aria-label="Zablokuj"><svg class="ic"><use href="#ly3"/></svg></button><button aria-label="Zamknij warstwę"><svg class="ic"><use href="#ly4"/></svg></button><button><svg class="ic"><use href="#ly5"/></svg>Ustal bieżący</button></div>
        <div class="d-flex gap-1"><button aria-label="Włącz wszystkie"><svg class="ic"><use href="#ly6"/></svg></button><button aria-label="Cofnij izolację"><svg class="ic"><use href="#ly7"/></svg></button><button aria-label="Odblokuj"><svg class="ic"><use href="#ly8"/></svg></button><button aria-label="Otwórz warstwę"><svg class="ic"><use href="#ly9"/></svg></button><button><svg class="ic"><use href="#ly10"/></svg>Dopasuj warstwę</button></div>
      </div>
    </div>
    <div class="pane-title">Warstwy<i class="caret"></i></div>
  </section>
  <section class="pane" style="width:117px">
    <div class="pane-body px-0">
      <button class="tool w28"><svg class="big-ic"><use href="#insert"/></svg><span>Wstaw</span><i class="caret caret-s"></i></button>
      <div class="stack">
        <button><svg class="ic"><use href="#blk-new"/></svg>Utwórz</button>
        <button><svg class="ic"><use href="#blk-edit"/></svg>Edycja</button>
        <button><svg class="ic"><use href="#attr"/></svg>Edycja atrybutów<i class="caret caret-s"></i></button>
      </div>
    </div>
    <div class="pane-title">Blok<i class="caret"></i></div>
  </section>
  <section class="pane" style="width:182px">
    <div class="pane-body px-0">
      <button class="tool w44"><svg class="big-ic"><use href="#match"/></svg><span>Uzgodnij
właściwości</span></button>
      <div class="stack marks">
        <span class="d-flex align-items-center"><svg class="ic"><use href="#wheel"/></svg></span>
        <span class="d-flex align-items-center"><svg class="ic"><use href="#weight"/></svg></span>
        <span class="d-flex align-items-center"><svg class="ic"><use href="#ltype"/></svg></span>
      </div>
      <div class="stack">
        <div class="field combo prop"><i class="swatch ms-1"></i><select class="ps-2" aria-label="Kolor"><option>JakWarstwa</option></select><i class="caret"></i></div>
        <div class="field combo prop stroke-pick"><svg width="42" height="2"><path stroke="#fff" stroke-width="2" d="M0 1h42"/></svg><select class="ps-0" aria-label="Grubość linii"><option>JakWarstwa</option></select><i class="caret"></i></div>
        <div class="field combo prop stroke-pick"><svg width="42" height="1"><path stroke="#c9ced4" stroke-width="2" d="M0 0h42"/></svg><select class="ps-0" aria-label="Rodzaj linii"><option>JakWarstwa</option></select><i class="caret"></i></div>
      </div>
    </div>
    <div class="pane-title">Właściwości<i class="caret"></i><svg class="launch"><use href="#launch"/></svg></div>
  </section>
  <section class="pane" style="width:44px">
    <div class="pane-body px-0">
      <button class="tool w28"><svg class="big-ic"><use href="#group"/></svg><span>Grupa</span></button>
      <div class="stack">
        <button class="justify-content-center" aria-label="Rozgrupuj"><svg class="ic"><use href="#ungroup"/></svg></button>
        <button class="justify-content-center" aria-label="Edycja grupy"><svg class="ic"><use href="#gr-edit"/></svg></button>
        <button class="on justify-content-center" aria-label="Wybór grup"><svg class="ic"><use href="#gr-sel"/></svg></button>
      </div>
    </div>
    <div class="pane-title">Grupy<i class="caret"></i></div>
  </section>
  <section class="pane" style="width:58px">
    <div class="pane-body justify-content-between">
      <button class="tool w32"><svg class="big-ic"><use href="#ruler"/></svg><span>Zmierz</span><i class="caret caret-s"></i></button>
      <div class="stack">
        <button aria-label="Szybki wybór"><svg class="ic"><use href="#qsel"/></svg></button>
        <button aria-label="Wybierz wszystko"><svg class="ic"><use href="#selall"/></svg></button>
        <button aria-label="Kalkulator"><svg class="ic"><use href="#calc"/></svg></button>
      </div>
    </div>
    <div class="pane-title">Narzędzia<i class="caret"></i></div>
  </section>
  <section class="pane" style="width:53px">
    <div class="pane-body justify-content-between">
      <button class="tool w28"><svg class="big-ic"><use href="#paste"/></svg><span>Wklej</span><i class="caret caret-s"></i></button>
      <div class="stack">
        <button aria-label="Wytnij"><svg class="ic"><use href="#cut"/></svg></button>
        <button aria-label="Kopiuj do schowka"><svg class="ic"><use href="#clip"/></svg></button>
      </div>
    </div>
    <div class="pane-title">Schowek</div>
  </section>
  <section class="pane flex-grow-1">
    <div class="pane-body ps-2">
      <button class="tool w28 pt-1"><svg class="big-ic"><use href="#base"/></svg><span class="mt-0">Baza</span><i class="caret caret-s"></i></button>
    </div>
    <div class="pane-title justify-content-start ps-1">Widok<i class="caret"></i><svg class="launch position-static"><use href="#launch"/></svg></div>
  </section>
</div>

<div class="files d-flex">
  <a class="file-tab" href="#">Początek</a>
  <div class="file-tab"><a href="#">_blank*</a><button aria-label="Zamknij _blank"><svg class="ic"><use href="#close"/></svg></button></div>
  <div class="file-tab current"><a href="#">_blank2*</a><button aria-label="Zamknij _blank2"><svg class="ic"><use href="#close"/></svg></button></div>
  <button class="add-tab" aria-label="Nowy rysunek"><svg class="ic"><use href="#plus"/></svg></button>
</div>
<div class="band"></div>

<main class="stage flex-grow-1 position-relative overflow-hidden">
  <svg class="drawing" aria-label="Rysunek">
    <defs>
      <pattern id="minor" x="230" y="15" width="19.540" height="19.540" patternUnits="userSpaceOnUse"><path stroke="#242b31" fill="none" d="M.5 0v20M0 .5h20"/></pattern>
      <radialGradient id="halo"><stop offset="0" stop-color="#1f6db4"/><stop offset=".55" stop-color="#1c4f80" stop-opacity=".7"/><stop offset="1" stop-color="#1c4f80" stop-opacity="0"/></radialGradient>
    </defs>
    <path fill="url(#minor)" d="M230 2h820v579H230z"/>
    <path stroke="#2a3239" fill="none" d="M327.500 2v579M424.500 2v579M522.500 2v579M620.500 2v579M717.500 2v579M815.500 2v579M912.500 2v579M1010.500 2v579M1049.500 2v579M230 2.500h820M230 93.500h820M230 191.500h820M230 289.500h820M230 386.500h820M230 484.500h820"/>
    <path stroke="#4a2930" d="M230 581.500h820"/>
    <path stroke="#2a7a35" d="M229.500 2v580"/>
    <path fill="none" stroke="#263a72" stroke-width="4" d="M431 93.500h195.500v234.500H431z"/>
    <path fill="none" stroke="#a3ade6" stroke-width="1.600" d="M431 93.500h195.500v234.500H431z"/>
    <path fill="#1f80d8" d="M427.500 89.500h7v7h-7zM623 89.500h7v7h-7zM427.500 324.500h7v7h-7zM623 324.500h7v7h-7z"/>
    <path fill="#2f72b4" d="M523 92h11v3h-11zM523 326.500h11v3h-11zM429.500 205h3v11h-3zM625 205h3v11h-3z"/>
    <circle cx="357" cy="139" r="12" fill="url(#halo)"/>
    <path stroke="#a4a9ac" stroke-width="1.300" d="M324.500 138.500h29M360.500 138.500h29M357 106.500v29M357 142v29.500"/>
    <circle cx="357" cy="139" r="2.500" fill="#16324d" stroke="#8cc8f5" stroke-width="1.300"/>
  </svg>
  <div class="view-label">[−][Góra][Model szkieletowy 2D]</div>
  <div class="view-ctl d-flex">
    <button aria-label="Minimalizuj widok"><svg class="ic"><use href="#min"/></svg></button>
    <button aria-label="Przywróć widok"><svg class="ic"><use href="#restore"/></svg></button>
    <button aria-label="Zamknij widok"><svg class="ic"><use href="#close"/></svg></button>
  </div>
  <svg class="ucs" viewBox="0 0 54 54"><path fill="none" stroke="#c5cacf" d="M4.500 13v34.500H38M1.500 44.500h6v6h-6zM41 38l8 8M49 38l-8 8M6 1l3.500 4L13 1M9.500 5v5"/></svg>
  <div class="console">
    <div class="echo">Polecenie: Określ przeciwny narożnik lub [krawęDź/OWbok/Zwbok]:</div>
    <div class="cmd d-flex align-items-center">
      <svg width="5" height="12"><path stroke="#a9b0b8" stroke-width="4" stroke-dasharray="1 1" d="M3 0v12"/></svg>
      <button aria-label="Zamknij wiersz poleceń"><svg class="x-ic"><use href="#close"/></svg></button>
      <button aria-label="Dostosuj"><svg class="ic"><use href="#wrench"/></svg></button>
      <div class="cmd-in d-flex align-items-center flex-grow-1 h-100">
        <button class="tight" aria-label="Ostatnie polecenia"><svg class="x-ic"><use href="#prompt"/></svg><i class="caret"></i></button>
        <input class="flex-grow-1 ms-1" type="text" placeholder="Wpisz polecenie" aria-label="Polecenie">
        <button aria-label="Historia"><svg width="5" height="3" viewBox="0 0 5 3"><path fill="#50565b" d="M0 3h5L2.500 0z"/></svg></button>
      </div>
    </div>
  </div>
</main>

<footer>
  <div class="foot d-flex justify-content-between">
    <nav class="d-flex ps-2" aria-label="Arkusze">
      <a class="sheet current" href="#">Model</a><a class="sheet" href="#">Układ1</a><a class="sheet" href="#">Układ2</a>
      <button class="sheet" aria-label="Nowy arkusz"><svg class="x-ic"><use href="#plus"/></svg></button>
    </nav>
    <div class="status d-flex align-items-center">
      <span class="coords text-end text-nowrap">65.2, 226.6, 0.0</span>
      <button class="lit" aria-label="Siatka"><svg class="ic"><use href="#s-grid"/></svg></button>
      <button class="plain" aria-label="Skok"><svg class="ic"><use href="#s-dots"/></svg></button>
      <button class="plain thin" aria-label="Opcje skoku"><i class="caret"></i></button>
      <button class="lit" aria-label="Orto"><svg class="ic"><use href="#s-ortho"/></svg></button>
      <button class="lit" aria-label="Biegunowy"><svg class="ic"><use href="#s-polar"/></svg></button>
      <button class="lit" aria-label="Lokalizacja"><svg class="ic"><use href="#s-snap"/></svg></button>
      <button class="plain thin" aria-label="Opcje lokalizacji"><i class="caret"></i></button>
      <button class="plain" aria-label="Obszar roboczy"><svg class="ic"><use href="#gear"/></svg></button>
      <button class="plain thin" aria-label="Opcje obszaru"><i class="caret"></i></button>
      <button class="plain" aria-label="Monitor"><svg class="ic"><use href="#s-mon"/></svg></button>
      <button class="plain" aria-label="Pełny ekran"><svg class="ic"><use href="#s-full"/></svg></button>
      <button class="plain" aria-label="Dostosowanie"><svg class="ic"><use href="#s-menu"/></svg></button>
    </div>
  </div>
  <div class="dock"><i></i></div>
</footer>
<script src="https://cdn.jsdelivr.net/npm/bootstrap@5.3.0/dist/js/bootstrap.bundle.min.js"></script>
</body>
</html>
